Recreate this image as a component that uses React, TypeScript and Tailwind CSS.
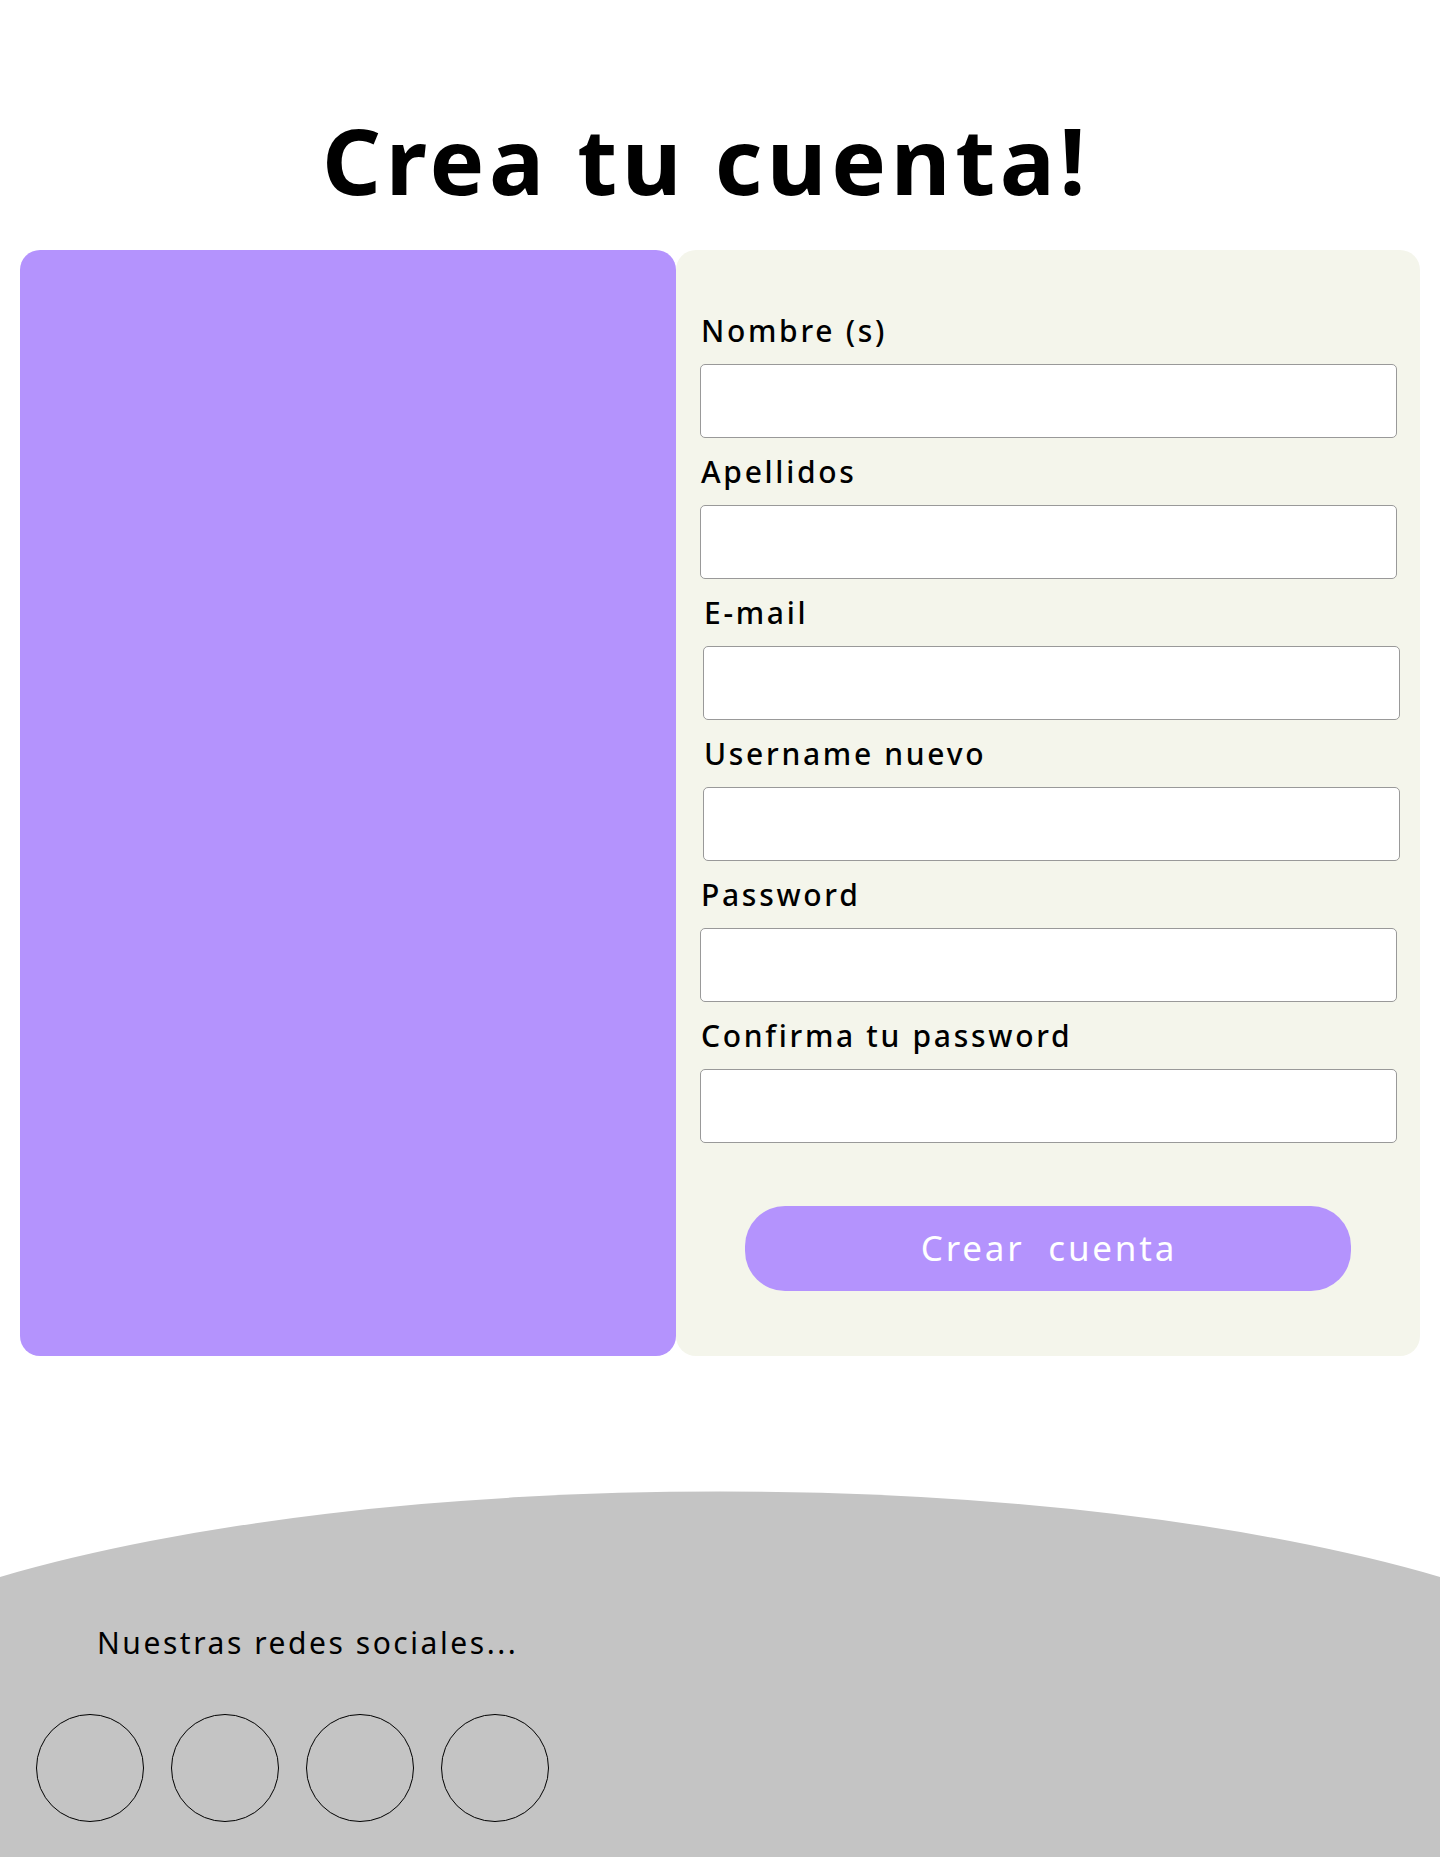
type FieldProps = {
  id: string;
  label: string;
  type?: string;
};

function Field({ id, label, type = "text" }: FieldProps) {
  return (
    <div className="flex flex-col gap-[13px]">
      <label htmlFor={id} className="pl-px text-[30px] leading-10 font-medium tracking-[0.09em]">
        {label}
      </label>
      <input
        id={id}
        name={id}
        type={type}
        className="h-[74px] w-full rounded-[5px] border border-[#999999] bg-white px-4 text-2xl outline-none focus:border-[#b493fd]"
      />
    </div>
  );
}

function SignUpForm() {
  return (
    <form
      className="flex flex-col rounded-[20px] bg-[#f4f5eb] pt-[61px] pb-[65px]"
      onSubmit={(event) => event.preventDefault()}
    >
      <div className="flex flex-col gap-[14px]">
        <div className="flex flex-col gap-[14px] pr-[23px] pl-6">
          <Field id="nombre" label="Nombre (s)" />
          <Field id="apellidos" label="Apellidos" />
        </div>
        <div className="flex flex-col gap-[14px] pr-5 pl-[27px]">
          <Field id="email" label="E-mail" type="email" />
          <Field id="username" label="Username nuevo" />
        </div>
        <div className="flex flex-col gap-[14px] pr-[23px] pl-6">
          <Field id="password" label="Password" type="password" />
          <Field id="confirm" label="Confirma tu password" type="password" />
        </div>
      </div>
      <button
        type="submit"
        className="mx-[69px] mt-[63px] h-[85px] cursor-pointer rounded-[40px] bg-[#b493fd] pl-0.5 text-[35px] tracking-[0.08em] whitespace-pre text-white"
      >
        {"Crear  cuenta"}
      </button>
    </form>
  );
}

const networks = ["Facebook", "Instagram", "Twitter", "YouTube"];

function Footer() {
  return (
    <footer className="flex grow flex-col">
      <svg
        className="block h-[86px] w-full text-[#c4c4c4]"
        viewBox="0 0 1440 86"
        preserveAspectRatio="none"
        aria-hidden="true"
      >
        <path d="M0 86 A980 266 0 0 1 1440 86 Z" fill="currentColor" />
      </svg>
      <div className="grow bg-[#c4c4c4] px-9 pt-[46px] pb-[35px]">
        <p className="pl-[61px] text-[30px] leading-10 tracking-[0.085em]">
          Nuestras redes sociales...
        </p>
        <nav className="mt-[51px] flex flex-wrap gap-[27px]">
          {networks.map((name) => (
            <a
              key={name}
              href="#"
              aria-label={name}
              className="size-[108px] rounded-full border border-black"
            />
          ))}
        </nav>
      </div>
    </footer>
  );
}

export default function App() {
  return (
    <div className="flex min-h-screen flex-col bg-white font-['Noto_Sans',sans-serif] text-black">
      <h1 className="pt-24 pr-7 text-center text-[92px] leading-[128px] font-bold tracking-wider">
        Crea tu cuenta!
      </h1>
      <main className="mt-[26px] mb-[135px] grid grid-cols-[656fr_744fr] px-5">
        <div className="rounded-[20px] bg-[#b493fd]" />
        <SignUpForm />
      </main>
      <Footer />
    </div>
  );
}
